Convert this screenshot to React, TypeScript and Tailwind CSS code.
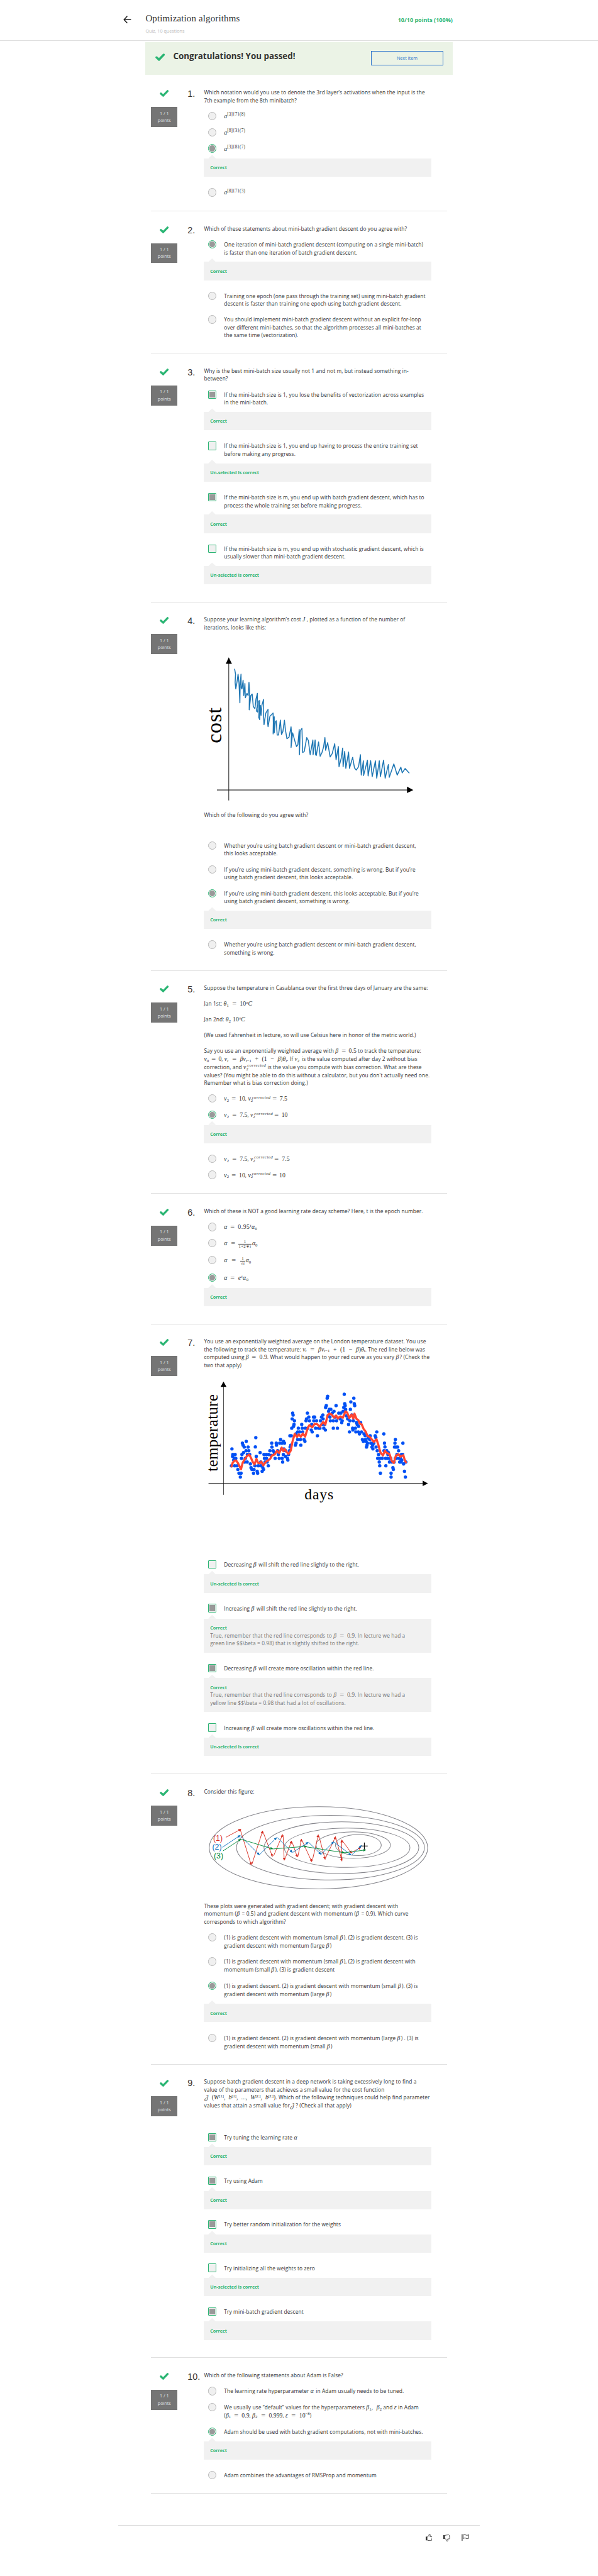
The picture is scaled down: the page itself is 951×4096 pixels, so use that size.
import React from "react";

type Pt = [number, number];

const SERIF = "font-['Liberation_Serif',serif]";

/* ---------- math helpers ---------- */

function M({ w = "", children }: { w?: string; children: React.ReactNode }) {
  return (
    <span className={`inline-flex items-baseline justify-between whitespace-nowrap font-['Liberation_Serif',serif] text-[19px] leading-none tracking-normal ${w}`}>
      {children}
    </span>
  );
}

const Eq = () => <span className="mx-[2px] scale-x-125">=</span>;
const Beta = () => <M w="w-[12px]"><i>β</i></M>;
const BetaEq = ({ v, w }: { v: string; w: string }) => (
  <M w={w}><i>β</i><Eq /><span>{v}</span></M>
);
const V = ({ s }: { s: string }) => <span><i>v</i><sub className="text-[13px]">{s}</sub></span>;
const VCorr = () => (
  <M w="w-[70px]">
    <span><i>v</i><sub className="text-[13px]">2</sub></span>
    <sup className="-ml-[7px] text-[13.5px] italic tracking-[0.75px]">corrected</sup>
  </M>
);
const Recurrence = () => (
  <M w="w-[193px]">
    <span><i>v</i><sub className="text-[13px] italic">t</sub></span>
    <Eq />
    <span><i>βv</i><sub className="text-[13px]"><i>t</i>−1</sub></span>
    <span>+</span>
    <span>(1</span>
    <span>−</span>
    <span><i>β</i>)<i>θ</i><sub className="text-[13px] italic">t</sub></span>
  </M>
);
const Act = ({ s }: { s: string }) => (
  <M><i>a</i><sup className="text-[14px] tracking-[0.3px]">{s}</sup></M>
);
const Alpha0 = () => <span><i>α</i><sub className="text-[13px]">0</sub></span>;
const Frac = ({ a, b }: { a: React.ReactNode; b: React.ReactNode }) => (
  <span className="mr-[2px] inline-flex -translate-y-[8px] flex-col items-center text-[13px] leading-none tracking-[0.6px]">
    <span>{a}</span>
    <span className="mt-[1px] border-t border-[#555] px-px">{b}</span>
  </span>
);
const VPair = ({ a, wa, b }: { a: string; wa: string; b: string }) => (
  <>
    <M w={wa}><V s="2" /><Eq /><span>{a}</span></M>,{" "}
    <VCorr /> <M w={b === "10" ? "w-[41px]" : "w-[47px]"}><Eq /><span>{b}</span></M>
  </>
);

/* ---------- building blocks ---------- */

function Check({ className }: { className: string }) {
  return (
    <svg viewBox="0 0 28 22" className={className} fill="none">
      <path d="M3.6 11.2 L10.6 17.6 L24.2 3.6" stroke="#2ab573" strokeWidth="6.4" strokeLinecap="round" />
    </svg>
  );
}

function Lines({ lines, lh = "h-6" }: { lines: React.ReactNode[]; lh?: string }) {
  return (
    <>
      {lines.map((l, i) => (
        <div key={i} className={`${lh} pt-px text-[16.2px] leading-6 tracking-[0.19px] whitespace-nowrap`}>{l}</div>
      ))}
    </>
  );
}

function Option({ kind, on, ok, h, lh, lines }: {
  kind: "radio" | "box"; on?: boolean; ok?: boolean; h: string; lh?: string; lines: React.ReactNode[];
}) {
  const shape = kind === "radio" ? "rounded-full" : "rounded-[2px]";
  const border = ok || on ? "border-2 border-[#2ab573]" : "border border-[#b5b5b5]";
  return (
    <div className={`flex ${h}`}>
      <div className={`ml-3 flex size-[26px] shrink-0 items-center justify-center bg-[#f0f0f0] ${shape} ${border}`}>
        {on && <div className={`size-[18px] bg-[#999] ${kind === "radio" ? "rounded-full" : ""}`} />}
      </div>
      <div className="ml-6 pt-[1.5px]">
        <Lines lines={lines} lh={lh} />
      </div>
    </div>
  );
}

function Feedback({ h = "h-[56.5px]", mb = "mb-[35px]", title = "Correct", lines }: {
  h?: string; mb?: string; title?: string; lines?: React.ReactNode[];
}) {
  return (
    <div className={`relative bg-[#f1f1f1] px-[19px] pt-[16px] ${h} ${mb}`}>
      <div className="absolute -top-[11px] left-[13px] h-[11.5px] w-6 bg-[#f1f1f1] [clip-path:polygon(50%_0,100%_100%,0_100%)]" />
      <div className="text-[14px] leading-6 font-bold text-[#2ab573]">{title}</div>
      {lines && <div className="text-[#757575]"><Lines lines={lines} lh="h-[24.5px]" /></div>}
    </div>
  );
}

function Question({ n, h, children }: { n: number; h: string; children: React.ReactNode }) {
  return (
    <section className={`mx-[18px] flex border-b-2 border-[#e0e0e0] ${h}`}>
      <div className="flex w-[81px] flex-col items-center pt-[46px]">
        <Check className="h-[22px] w-[28px]" />
        <div className="mt-[30px] flex h-[62px] w-full flex-col items-center justify-center bg-[#757575] text-[14px] leading-[22px] text-[#e3e3e3]">
          <span>1 / 1</span>
          <span>points</span>
        </div>
      </div>
      <div className="w-[51px] shrink-0 translate-x-[31px] pt-[42px] font-['Liberation_Sans',sans-serif] text-[28px] leading-8 whitespace-nowrap">{n}.</div>
      <div className="ml-[31px] w-[701px] shrink-0 pt-[41px]">{children}</div>
    </section>
  );
}

/* ---------- charts ---------- */

const project = (pts: Pt[], ox: number, oy: number, kx: number, ky: number) =>
  pts.map(([x, y]): Pt => [(x - ox) * kx, (y - oy) * ky]);
const parse = (s: string): Pt[] => s.trim().split(/\s+/).map((p) => p.split(",").map(Number) as Pt);
const str = (pts: Pt[]) => pts.map((p) => p.map((v) => v.toFixed(1)).join(",")).join(" ");

const COST = parse(`521,155 525,178 523,215 526,245 531,215 536,178 540,215 544,308 545,230 549,178 550,240 553,245 558,205
 561,275 566,220 568,285 575,265 580,275 584,215 586,250 585,340 592,275 598,268 603,325 610,335 615,290 621,265 620,325 616,345
 622,350 626,300 631,298 627,375 631,385 634,320 637,365 641,318 648,293 647,340 650,408 658,355 668,338 666,400 668,417 676,370 690,355 691,400 690,450
 695,372 695,445 700,395 704,390 708,455 714,455 722,387 727,453 733,440 740,388 744,430 751,472 760,465 769,418 771,450 769,512 776,445
 785,480 793,508 799,500 805,430 806,545 809,440 813,430 817,425 820,535 827,530 838,467 845,480 853,545 865,478 866,545 875,478 877,545
 880,548 890,487 897,552 905,535 912,510 918,467 921,525 930,490 941,555 950,540 961,495 967,568 977,508 980,600 990,560 996,515
 998,600 1005,530 1010,607 1022,533 1026,607 1040,557 1048,605 1056,615 1066,600 1074,545 1078,638 1087,573 1088,640 1105,570
 1108,642 1119,572 1126,645 1140,573 1146,652 1157,573 1162,645 1176,570 1183,652 1197,590 1201,648 1221,587 1236,638 1252,602
 1258,628 1271,608 1288,628`);

function CostChart() {
  const p = (s: string) => str(project(parse(s), 385, 80, 0.7015, 0.676));
  return (
    <svg className="h-[473px] w-[701px] overflow-visible" viewBox="0 0 701 473">
      <polyline points={p("495,125 495,754")} stroke="#222" strokeWidth="2" />
      <polyline points={p("443,706 1285,706")} stroke="#222" strokeWidth="2" />
      <polygon points={p("495,101 482,130 509,130")} />
      <polygon points={p("1307,706 1279,691 1279,720")} />
      <polyline points={str(project(COST, 385, 80, 0.7015, 0.676))} fill="none" stroke="#1f77b4" strokeWidth="3" strokeLinejoin="round" strokeLinecap="round" />
      <text transform="translate(54 279) rotate(-90)" textLength="110" className={SERIF} fontSize="66">cost</text>
    </svg>
  );
}

const DOTS = parse(`509,967 513,1012 523,1012 512,1027 519,1043 526,1043 517,1057 507,1103 521,1103 532,1103 535,1133 540,1163 549,1163
 546,1194 551,1043 553,1012 560,997 555,921 558,937 563,952 572,906 580,952 571,982 583,982 577,1012 587,1012 568,1043 565,1073 576,1073
 590,1088 593,1118 597,1133 606,1133 604,1163 614,876 612,951 616,1027 633,997 610,1103 620,1148 622,1163 642,1148 648,1133 625,1103
 636,1103 645,1118 636,1073 650,1012 660,1012 652,1043 661,1043 655,1073 664,1073 669,1103 676,982 684,921 685,952 690,982 670,1012
 681,1020 695,997 699,1043 704,921 705,937 710,982 713,1012 717,1043 723,891 719,921 729,921 740,921 736,906 727,967 738,967 730,1043
 732,1073 735,1012 745,1027 753,1043 755,1057 745,982 758,1012 762,982 765,952 768,937 764,861 770,861 776,679 778,694 774,725 784,740
 782,770 780,785 772,800 790,846 788,937 791,921 798,891 798,830 801,800 810,891 812,937 807,830 816,770 818,800 820,830 826,891 830,906
 832,800 835,740 837,725 841,679 847,710 850,740 842,800 858,815 862,830 860,770 868,710 873,710 869,740 881,740 877,800 885,861 890,800
 898,740 896,800 903,710 909,694 910,725 905,770 913,800 920,815 917,770 921,633 924,618 928,558 930,543 934,664 937,648 944,648 932,700
 940,710 942,740 955,740 950,679 958,664 955,800 967,618 969,740 973,800 963,710 979,679 985,725 988,679 992,755 994,740 998,664
 1001,633 1003,527 1005,603 1007,618 1009,648 1013,700 1018,725 1022,770 1026,830 1028,740 1030,648 1032,588 1036,694 1045,558 1047,603
 1049,618 1043,740 1040,800 1041,815 1052,800 1054,830 1057,755 1060,770 1066,785 1065,830 1070,846 1075,755 1079,830 1083,891 1087,906
 1090,846 1096,891 1095,860 1099,906 1103,937 1101,952 1105,921 1108,880 1115,891 1117,861 1120,921 1125,952 1129,967 1128,937 1133,921
 1139,861 1146,830 1142,876 1143,952 1148,982 1154,1012 1150,1043 1157,1073 1159,1103 1162,1163 1160,1043 1170,1043 1180,921 1182,951
 1177,846 1178,982 1190,982 1185,1043 1193,1043 1186,1103 1195,1012 1197,997 1202,1073 1203,1043 1207,1043 1209,1163 1209,1194 1217,1118
 1219,1133 1213,1073 1222,1073 1228,891 1226,921 1224,952 1231,952 1238,952 1242,982 1235,1012 1233,1043 1228,1043 1245,1043 1247,1073
 1253,1073 1256,1057 1255,1012 1260,1012 1261,921 1264,1088 1268,1148 1272,1194 1274,1073 1250,1043`);

const AVERAGE = parse(`507,1108 512,1080 520,1062 528,1062 535,1080 542,1105 549,1130 556,1080 565,1050 575,1025 585,1013 593,1040 600,1070
 608,1092 617,1048 624,1080 631,1083 638,1070 647,1100 658,1072 668,1060 678,1045 685,1020 697,1012 707,982 717,1000 728,957 735,985
 740,967 750,992 758,1008 768,980 775,910 785,846 795,870 803,850 812,868 821,843 831,868 842,800 850,775 862,793 873,765 884,768
 895,788 910,750 920,770 930,695 937,683 948,690 958,715 967,698 975,722 985,705 997,715 1008,665 1016,675 1025,718 1035,690 1043,722
 1048,683 1057,725 1065,735 1072,765 1080,770 1088,805 1098,830 1105,862 1115,870 1125,892 1133,910 1145,890 1153,935 1162,995
 1173,1020 1182,982 1190,1000 1202,1008 1208,1040 1213,1068 1221,1080 1230,1022 1242,1010 1250,1030 1263,1018 1268,1050 1274,1075`);

function TemperatureChart() {
  const q = (pts: Pt[]) => project(pts, 385, 400, 0.7015, 0.3827);
  const p = (s: string) => str(q(parse(s)));
  return (
    <svg className="h-[392px] w-[701px] overflow-visible" viewBox="0 0 701 392">
      <polyline points={p("472,460 472,1337")} stroke="#222" strokeWidth="1.6" />
      <polyline points={p("406,1245 1350,1245")} stroke="#111" strokeWidth="2" />
      <polygon points={p("472,424 459,467 485,467")} />
      <polygon points={p("1371,1245 1348,1223 1348,1267")} />
      {q(DOTS).map(([x, y], i) => <circle key={i} cx={x} cy={y} r="5.2" fill="#0050f5" />)}
      <polyline points={str(q(AVERAGE))} fill="none" stroke="#ff4632" strokeWidth="6.6" strokeLinejoin="round" strokeLinecap="round" />
      <text transform="translate(42 286.500) rotate(-90)" textLength="238" className={SERIF} fontSize="48">temperature</text>
      <text x="311" y="372" textLength="89" className={SERIF} fontSize="46">days</text>
    </svg>
  );
}

const ELLIPSES = [
  [889.5, 412, 480.5, 216],
  [942.5, 411, 413.5, 170],
  [990.5, 411, 340.5, 136],
  [1015.5, 411.5, 276.5, 103.5],
  [1042.5, 397.5, 163.5, 69.5],
  [1065, 397.5, 101, 55.5],
];
const PATHS = [
  { c: "#d62a1e", id: "r", segs: ["482,357 549,314", "546,318 594,502", "597,498 644,323", "645,326 687,458", "692,455 732,342", "734,345 739,478", "741,475 771,376", "773,380 797,461", "799,458 815,366", "817,372 860,485", "862,482 889,343", "891,348 919,473", "920,468 965,353", "966,358 993,482", "992,478 992,370", "993,372 1035,440", "1035,437 1076,410"] },
  { c: "#0a6ebd", id: "b", segs: ["467,409 546,346", "547,350 630,449", "630,448 706,358", "708,357 775,437", "778,435 845,383", "847,384 901,447", "901,447 957,380", "957,381 1033,450", "1036,449 1079,399"] },
  { c: "#008837", id: "g", segs: ["470,428 549,366", "549,367 689,418", "690,418 838,404", "837,407 1004,438", "1003,438 1098,423"] },
];

function MomentumFigure() {
  const kx = 0.7015, ky = 0.5867, ox = 385, oy = 180;
  const label = "font-['Liberation_Sans',sans-serif]";
  return (
    <svg className="h-[270px] w-[701px]" viewBox="0 0 701 270">
      <defs>
        {PATHS.map(({ c, id }) => (
          <marker key={id} id={`head-${id}`} markerUnits="userSpaceOnUse" markerWidth="9" markerHeight="8" refX="8" refY="4" orient="auto">
            <path d="M0 0L9 4L0 8Z" fill={c} />
          </marker>
        ))}
      </defs>
      {ELLIPSES.map(([x, y, rx, ry]) => (
        <ellipse key={x} cx={(x - ox) * kx} cy={(y - oy) * ky} rx={rx * kx} ry={ry * ky} fill="none" stroke="#85858b" strokeWidth="2" />
      ))}
      {PATHS.map(({ c, id, segs }) =>
        segs.map((s) => (
          <polyline key={s} points={str(project(parse(s), ox, oy, kx, ky))} stroke={c} strokeWidth="1.8" markerEnd={`url(#head-${id})`} />
        )),
      )}
      <path d="M485.500 130.500H506M495.500 120V141" stroke="#000" strokeWidth="2.2" />
      <text x="29" y="114" fontSize="24" fill="#d62a1e" className={label}>(1)</text>
      <text x="26" y="142" fontSize="24" fill="#0a6ebd" className={label}>(2)</text>
      <text x="31" y="168" fontSize="24" fill="#008837" className={label}>(3)</text>
    </svg>
  );
}

/* ---------- footer icons ---------- */

function Thumb({ className }: { className: string }) {
  return (
    <svg viewBox="0 0 21 22" className={`h-[22px] w-[21px] ${className}`} fill="none" stroke="#333" strokeWidth="1.8" strokeLinejoin="round">
      <path d="M0 8.500H5V20H0Z" fill="#333" stroke="none" />
      <path d="M5 9.500C8 8.500 9.500 5.500 10.200 2.500C10.800 0.500 13.800 0.500 14 3C14.100 4.800 13.500 6.500 13 8L18.300 8.600C20 9 20.300 10.500 20 12L18.500 19C18.200 20.500 17.500 21 16 21C12 21 8 20.300 5 19.300" />
    </svg>
  );
}

function Flag() {
  return (
    <svg viewBox="0 0 24 22" className="h-[22px] w-6" fill="none" stroke="#333" strokeWidth="1.8" strokeLinejoin="round">
      <path d="M1.800 1V21.500" strokeWidth="2.4" />
      <path d="M4.800 3.500C8.500 1.500 11 2.500 14 4C17 5 19.500 4 22.500 2.500V13.500C19 15.500 16.500 15 13.500 13.500C10.500 12.300 8 12.800 4.800 14.500Z" />
    </svg>
  );
}

/* ---------- page ---------- */

export default function App() {
  return (
    <div className="h-[7946px] w-[1845px] overflow-hidden bg-white font-['Open_Sans',sans-serif] text-[16px] leading-6 text-[#333] [zoom:0.51545]">
      <header className="h-[127px] border-b-2 border-[#dedede]">
        <div className="mx-auto flex w-[1084px] pr-[68px]">
          <svg viewBox="0 0 24 24" className="mt-[48px] ml-[0.500px] h-6 w-6" fill="none" stroke="#222" strokeWidth="3">
            <path d="M12.500 1L2.500 12L12.500 23M2.500 12H24" />
          </svg>
          <div className="ml-[44px] flex-1">
            <h1 className="pt-[38px] font-['Liberation_Serif',serif] text-[29px] leading-9 tracking-[0.3px]">Optimization algorithms</h1>
            <p className="pt-[10px] text-[14px] leading-6 text-[#bdbdbd]">Quiz, 10 questions</p>
          </div>
          <div className="pt-[51px] text-[17.5px] leading-6 font-bold text-[#2ab573]">10/10 points (100%)</div>
        </div>
      </header>

      <main className="mx-auto w-[948px]">
        <div className="mt-[3px] flex h-[100px] bg-[#ebf3e6]">
          <Check className="mt-[34px] ml-[30px] h-6 w-[30px]" />
          <h2 className="mt-[26px] ml-[26px] flex-1 text-[26px] leading-9 font-bold">Congratulations! You passed!</h2>
          <button className="mt-[28px] mr-[29px] h-[43px] w-[223px] border-2 border-[#2a73cc] text-[14px] text-[#2a73cc]">Next Item</button>
        </div>

        <div className="mt-[2px]">
          <Question n={1} h="h-[420px]">
            <div className="h-[72px]"><Lines lines={["Which notation would you use to denote the 3rd layer’s activations when the input is the", "7th example from the 8th minibatch?"]} /></div>
            <Option kind="radio" h="h-[50px]" lines={[<Act s="[3]{7}(8)" />]} />
            <Option kind="radio" h="h-[50px]" lines={[<Act s="[8]{3}(7)" />]} />
            <Option kind="radio" on h="h-[44px]" lines={[<Act s="[3]{8}(7)" />]} />
            <Feedback />
            <Option kind="radio" h="h-[50px]" lines={[<Act s="[8]{7}(3)" />]} />
          </Question>

          <Question n={2} h="h-[439px]">
            <div className="h-[48px]"><Lines lines={["Which of these statements about mini-batch gradient descent do you agree with?"]} /></div>
            <Option kind="radio" on h="h-[67px]" lines={["One iteration of mini-batch gradient descent (computing on a single mini-batch)", "is faster than one iteration of batch gradient descent."]} />
            <Feedback />
            <Option kind="radio" h="h-[73px]" lines={["Training one epoch (one pass through the training set) using mini-batch gradient", "descent is faster than training one epoch using batch gradient descent."]} />
            <Option kind="radio" h="h-[80px]" lines={["You should implement mini-batch gradient descent without an explicit for-loop", "over different mini-batches, so that the algorithm processes all mini-batches at", "the same time (vectorization)."]} />
          </Question>

          <Question n={3} h="h-[767px]">
            <div className="h-[72px]"><Lines lines={["Why is the best mini-batch size usually not 1 and not m, but instead something in-", "between?"]} /></div>
            <Option kind="box" on h="h-[67px]" lines={["If the mini-batch size is 1, you lose the benefits of vectorization across examples", "in the mini-batch."]} />
            <Feedback />
            <Option kind="box" ok h="h-[67px]" lines={["If the mini-batch size is 1, you end up having to process the entire training set", "before making any progress."]} />
            <Feedback title="Un-selected is correct" />
            <Option kind="box" on h="h-[67px]" lines={["If the mini-batch size is m, you end up with batch gradient descent, which has to", "process the whole training set before making progress."]} />
            <Feedback />
            <Option kind="box" ok h="h-[67px]" lines={["If the mini-batch size is m, you end up with stochastic gradient descent, which is", "usually slower than mini-batch gradient descent."]} />
            <Feedback title="Un-selected is correct" />
          </Question>

          <Question n={4} h="h-[1137px]">
            <div className="h-[115px]"><Lines lh="h-[25px]" lines={[<>Suppose your learning algorithm’s cost <M w="w-[13px]"><i>J</i></M>, plotted as a function of the number of</>, "iterations, looks like this:"]} /></div>
            <div className="h-[487px]"><CostChart /></div>
            <div className="h-[94.500px]"><Lines lines={["Which of the following do you agree with?"]} /></div>
            <Option kind="radio" h="h-[73.500px]" lines={["Whether you’re using batch gradient descent or mini-batch gradient descent,", "this looks acceptable."]} />
            <Option kind="radio" h="h-[73.500px]" lines={["If you’re using mini-batch gradient descent, something is wrong. But if you’re", "using batch gradient descent, this looks acceptable."]} />
            <Option kind="radio" on h="h-[67px]" lines={["If you’re using mini-batch gradient descent, this looks acceptable. But if you’re", "using batch gradient descent, something is wrong."]} />
            <Feedback />
            <Option kind="radio" h="h-[60px]" lines={["Whether you’re using batch gradient descent or mini-batch gradient descent,", "something is wrong."]} />
          </Question>

          <Question n={5} h="h-[688px]">
            <div className="h-[340px]">
              <div className="h-[48.500px]"><Lines lines={["Suppose the temperature in Casablanca over the first three days of January are the same:"]} /></div>
              <div className="h-[48.500px]"><Lines lines={[<>Jan 1st: <M w="w-[88px]"><span><i>θ</i><sub className="text-[13px]">1</sub></span><Eq /><span>10<sup className="text-[13px] italic">o</sup><i>C</i></span></M></>]} /></div>
              <div className="h-[48.500px]"><Lines lines={[<>Jan 2nd: <M w="w-[60px]"><span><i>θ</i><sub className="text-[13px]">2</sub></span><span>10<sup className="text-[13px] italic">o</sup><i>C</i></span></M></>]} /></div>
              <div className="h-[48.500px]"><Lines lines={["(We used Fahrenheit in lecture, so will use Celsius here in honor of the metric world.)"]} /></div>
              <Lines
                lh="h-[24.800px]"
                lines={[
                  <>Say you use an exponentially weighted average with <BetaEq v="0.5" w="w-[65px]" /> to track the temperature:</>,
                  <><M w="w-[54px]"><V s="0" /><Eq /><span>0</span></M>, <Recurrence />. If <M w="w-[18px]"><V s="2" /></M> is the value computed after day 2 without bias</>,
                  <>correction, and <VCorr /> is the value you compute with bias correction. What are these</>,
                  "values? (You might be able to do this without a calculator, but you don't actually need one.",
                  "Remember what is bias correction doing.)",
                ]}
              />
            </div>
            <Option kind="radio" h="h-[50px]" lines={[<VPair a="10" wa="w-[65px]" b="7.5" />]} />
            <Option kind="radio" on h="h-[44px]" lines={[<VPair a="7.5" wa="w-[72px]" b="10" />]} />
            <Feedback />
            <Option kind="radio" h="h-[50px]" lines={[<VPair a="7.5" wa="w-[72px]" b="7.5" />]} />
            <Option kind="radio" h="h-[50px]" lines={[<VPair a="10" wa="w-[65px]" b="10" />]} />
          </Question>

          <Question n={6} h="h-[402px]">
            <div className="h-[48px]"><Lines lines={["Which of these is NOT a good learning rate decay scheme? Here, t is the epoch number."]} /></div>
            <Option kind="radio" h="h-[50px]" lines={[<M w="w-[103px]"><i>α</i><Eq /><span className="tracking-[1px]">0.95<sup className="text-[13px] italic">t</sup><Alpha0 /></span></M>]} />
            <Option kind="radio" h="h-[52px]" lines={[<M w="w-[103px]"><i>α</i><Eq /><span><Frac a="1" b={<>1+2∗<i>t</i></>} /><Alpha0 /></span></M>]} />
            <Option kind="radio" h="h-[55px]" lines={[<M w="w-[83px]"><i>α</i><Eq /><span><Frac a="1" b={<>√<i>t</i></>} /><Alpha0 /></span></M>]} />
            <Option kind="radio" on h="h-[44px]" lines={[<M w="w-[76px]"><i>α</i><Eq /><span className="tracking-[1px]"><i>e</i><sup className="text-[13px] italic">t</sup><Alpha0 /></span></M>]} />
            <Feedback />
          </Question>

          <Question n={7} h="h-[1388px]">
            <div className="h-[127px]">
              <Lines
                lh="h-[24.500px]"
                lines={[
                  "You use an exponentially weighted average on the London temperature dataset. You use",
                  <>the following to track the temperature: <Recurrence />. The red line below was</>,
                  <>computed using <BetaEq v="0.9" w="w-[66px]" />. What would happen to your red curve as you vary <Beta />? (Check the</>,
                  "two that apply)",
                ]}
              />
            </div>
            <div className="h-[560px]"><TemperatureChart /></div>
            <Option kind="box" ok h="h-[44px]" lines={[<>Decreasing <Beta /> will shift the red line slightly to the right.</>]} />
            <Feedback title="Un-selected is correct" mb="mb-[34.500px]" />
            <Option kind="box" on h="h-[45px]" lines={[<>Increasing <Beta /> will shift the red line slightly to the right.</>]} />
            <Feedback h="h-[105px]" lines={[<>True, remember that the red line corresponds to <BetaEq v="0.9" w="w-[66px]" />. In lecture we had a</>, "green line $$\\beta = 0.98) that is slightly shifted to the right."]} />
            <Option kind="box" on h="h-[44px]" lines={[<>Decreasing <Beta /> will create more oscillation within the red line.</>]} />
            <Feedback h="h-[105px]" lines={[<>True, remember that the red line corresponds to <BetaEq v="0.9" w="w-[66px]" />. In lecture we had a</>, "yellow line $$\\beta = 0.98 that had a lot of oscillations."]} />
            <Option kind="box" ok h="h-[44px]" lines={[<>Increasing <Beta /> will create more oscillations within the red line.</>]} />
            <Feedback title="Un-selected is correct" />
          </Question>

          <Question n={8} h="h-[896px]">
            <div className="h-[51px]"><Lines lines={["Consider this figure:"]} /></div>
            <div className="h-[302px]"><MomentumFigure /></div>
            <div className="h-[96px]">
              <Lines
                lh="h-[24.500px]"
                lines={[
                  "These plots were generated with gradient descent; with gradient descent with",
                  <>momentum (<Beta /> = 0.5) and gradient descent with momentum (<Beta /> = 0.9). Which curve</>,
                  "corresponds to which algorithm?",
                ]}
              />
            </div>
            <Option kind="radio" h="h-[75px]" lh="h-[25px]" lines={[<>(1) is gradient descent with momentum (small <Beta />). (2) is gradient descent. (3) is</>, <>gradient descent with momentum (large <Beta />)</>]} />
            <Option kind="radio" h="h-[75px]" lh="h-[25px]" lines={[<>(1) is gradient descent with momentum (small <Beta />), (2) is gradient descent with</>, <>momentum (small <Beta />), (3) is gradient descent</>]} />
            <Option kind="radio" on h="h-[69px]" lh="h-[25px]" lines={[<>(1) is gradient descent. (2) is gradient descent with momentum (small <Beta />). (3) is</>, <>gradient descent with momentum (large <Beta />)</>]} />
            <Feedback />
            <Option kind="radio" h="h-[60px]" lh="h-[25px]" lines={[<>(1) is gradient descent. (2) is gradient descent with momentum (large <Beta />) . (3) is</>, <>gradient descent with momentum (small <Beta />)</>]} />
          </Question>

          <Question n={9} h="h-[905px]">
            <div className="h-[170px]">
              <Lines
                lh="h-[24.300px]"
                lines={[
                  "Suppose batch gradient descent in a deep network is taking excessively long to find a",
                  "value of the parameters that achieves a small value for the cost function",
                  <>
                    <M w="w-[221px]">
                      <span className="font-['DejaVu_Math_TeX_Gyre',serif] text-[18px]">𝒥</span><span>(<i>W</i><sup className="text-[13px]">[1]</sup>,</span><span><i>b</i><sup className="text-[13px]">[1]</sup>,</span>
                      <span>...,</span><span><i>W</i><sup className="text-[13px]">[<i>L</i>]</sup>,</span><span><i>b</i><sup className="text-[13px]">[<i>L</i>]</sup>)</span>
                    </M>. Which of the following techniques could help find parameter
                  </>,
                  <>values that attain a small value for<M w="w-[18px]"><span className="font-['DejaVu_Math_TeX_Gyre',serif] text-[18px]">𝒥</span></M>? (Check all that apply)</>,
                ]}
              />
            </div>
            <Option kind="box" on h="h-[44px]" lines={[<>Try tuning the learning rate <M w="w-[13px]"><i>α</i></M></>]} />
            <Feedback mb="mb-[34px]" />
            <Option kind="box" on h="h-[44px]" lines={["Try using Adam"]} />
            <Feedback mb="mb-[34px]" />
            <Option kind="box" on h="h-[44px]" lines={["Try better random initialization for the weights"]} />
            <Feedback mb="mb-[34px]" />
            <Option kind="box" ok h="h-[44px]" lines={["Try initializing all the weights to zero"]} />
            <Feedback title="Un-selected is correct" mb="mb-[34px]" />
            <Option kind="box" on h="h-[44px]" lines={["Try mini-batch gradient descent"]} />
            <Feedback />
          </Question>

          <Question n={10} h="h-[419px]">
            <div className="h-[48px]"><Lines lines={["Which of the following statements about Adam is False?"]} /></div>
            <Option kind="radio" h="h-[50px]" lines={[<>The learning rate hyperparameter <M w="w-[12px]"><i>α</i></M> in Adam usually needs to be tuned.</>]} />
            <Option
              kind="radio"
              h="h-[75px]"
              lines={[
                <>We usually use “default” values for the hyperparameters <M w="w-[48px]"><span><i>β</i><sub className="text-[13px]">1</sub>,</span><span><i>β</i><sub className="text-[13px]">2</sub></span></M> and <M w="w-[8px]"><i>ε</i></M> in Adam</>,
                <>(<M w="w-[73px]"><span><i>β</i><sub className="text-[13px]">1</sub></span><Eq /><span>0.9</span></M>, <M w="w-[94px]"><span><i>β</i><sub className="text-[13px]">2</sub></span><Eq /><span>0.999</span></M>, <M w="w-[75px]"><i>ε</i><Eq /><span>10<sup className="text-[13px]">−8</sup></span></M>)</>,
              ]}
            />
            <Option kind="radio" on h="h-[43.500px]" lines={["Adam should be used with batch gradient computations, not with mini-batches."]} />
            <Feedback mb="mb-[34px]" />
            <Option kind="radio" h="h-[50px]" lines={["Adam combines the advantages of RMSProp and momentum"]} />
          </Question>
        </div>
      </main>

      <footer className="mx-auto mt-[96px] flex w-[1116px] justify-end border-t border-[#dcdcdc] pt-[26px] pr-[33px]">
        <Thumb className="mr-[34px]" />
        <Thumb className="mt-px mr-[35px] -scale-y-100" />
        <Flag />
      </footer>
    </div>
  );
}
